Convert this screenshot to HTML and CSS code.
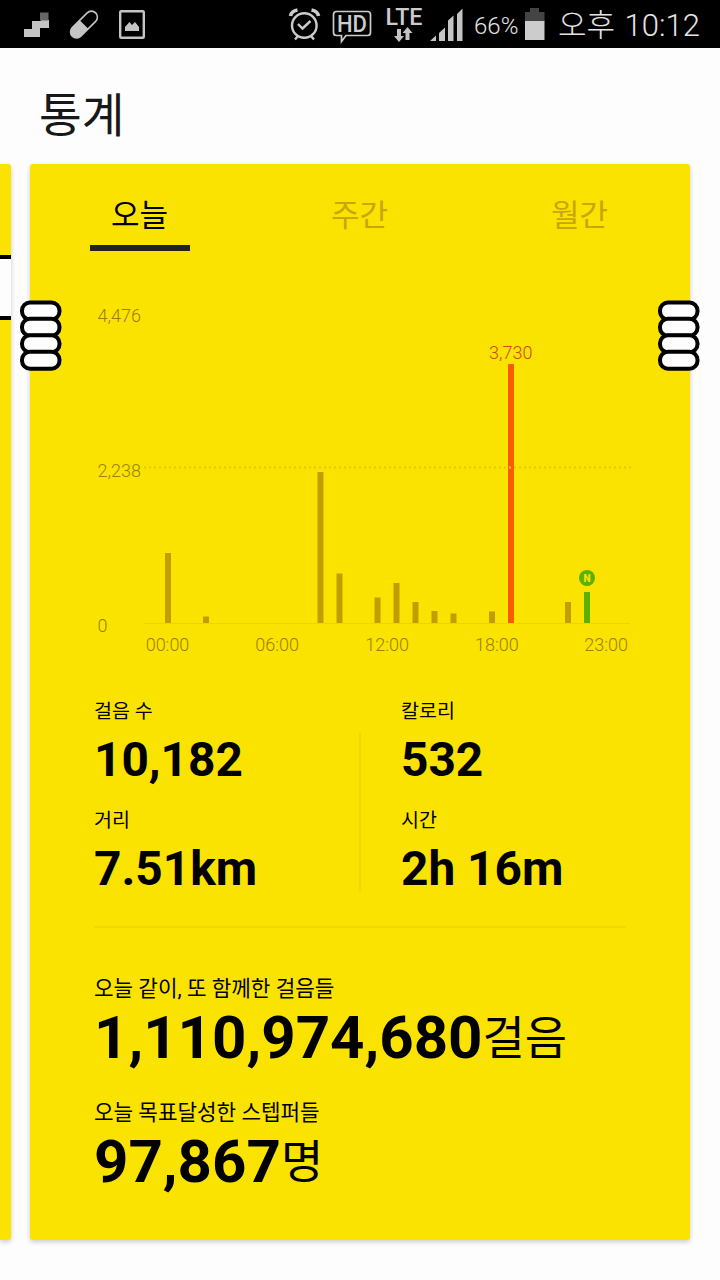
FILE: index.html
```html
<!DOCTYPE html>
<html lang="ko">
<head>
  <meta charset="UTF-8">
  <meta name="viewport" content="width=device-width, initial-scale=1">
  <title>통계</title>
  <link rel="stylesheet" href="styles.css">
</head>
<body>

<header class="statusbar">
  <svg class="notices" width="150" height="48" viewBox="0 0 150 48">
    <path d="M24 37V29h8v-8h9v-1h8v8h-9v9z" fill="#c4c4c4"/>
    <path d="M40 12.500h8.500v8H40z" fill="#666"/>
    <g transform="rotate(-45 84 24.500)">
      <rect x="67.500" y="18.500" width="33" height="12" rx="6" fill="none" stroke="#c4c4c4" stroke-width="1.600"/>
      <path d="M84 18.500v12H73.500a6 6 0 0 1 0-12z" fill="#c4c4c4"/>
    </g>
    <rect x="120.200" y="11.200" width="23.600" height="26.600" rx="1" fill="none" stroke="#c4c4c4" stroke-width="2.400"/>
    <path d="M125 31v-4l4.500-5 2.500 3 3-3 4 5v4z" fill="#c4c4c4"/>
  </svg>
  <svg class="signals" width="190" height="48" viewBox="280 0 190 48">
    <g fill="none" stroke="#ccc" stroke-width="2.400">
      <circle cx="304.300" cy="25.500" r="12.300"/>
      <path d="M298 24l4.500 4.500 8-7.500M298 36l-3 3.500M311 36l3 3.500"/>
      <path d="M290.500 16q1-5 7-6M311.500 10q6 1 7 6" stroke-width="3.600"/>
    </g>
    <path d="M336.500 11.500h31q3 0 3 3v18q0 3-3 3h-21.500l-4.500 6v-6h-5q-3 0-3-3v-18q0-3 3-3z" fill="none" stroke="#ccc" stroke-width="1.700"/>
    <text class="hd" x="352" y="32" textLength="30" lengthAdjust="spacingAndGlyphs">HD</text>
    <text class="lte" x="404" y="25" textLength="37" lengthAdjust="spacingAndGlyphs">LTE</text>
    <path d="M397 29h4v7h3l-5 6-5-6h3zM405.500 40v-7h-3l5-6 5 6h-3v7z" fill="#c4c4c4"/>
    <path d="M430 41l6-5.500V41zM439 41v-8l6-5.500V41zM448 41V20.500l5.500-5V41zM457 41V14l5.500-5.500V41z" fill="#c4c4c4"/>
  </svg>
  <span class="percent">66%</span>
  <svg class="battery" width="22" height="48" viewBox="524 0 22 48">
    <path d="M525 12h5V8h9v4h5.500v9.500H525z" fill="#444"/>
    <path d="M525 21h19.500v19H525z" fill="#ccc"/>
  </svg>
  <span class="clock">오후 <span>10:12</span></span>
</header>

<h1>통계</h1>

<main class="pager">
  <section class="card prev"><div class="band"></div></section>

  <section class="card stats">
    <svg class="rings left" width="42" height="71" viewBox="0 0 42 71">
      <g class="ring">
        <rect x="2" y="2.500" width="37.500" height="17" rx="8"/>
        <rect x="2" y="18.800" width="37.500" height="17" rx="8"/>
        <rect x="2" y="35.200" width="37.500" height="17" rx="8"/>
        <rect x="2" y="51.700" width="37.500" height="17" rx="8"/>
      </g>
    </svg>
    <svg class="rings right" width="42" height="71" viewBox="0 0 42 71">
      <g class="ring">
        <rect x="2" y="2.500" width="37.500" height="17" rx="8"/>
        <rect x="2" y="18.800" width="37.500" height="17" rx="8"/>
        <rect x="2" y="35.200" width="37.500" height="17" rx="8"/>
        <rect x="2" y="51.700" width="37.500" height="17" rx="8"/>
      </g>
    </svg>

    <nav class="tabs">
      <a class="tab active">오늘</a>
      <a class="tab">주간</a>
      <a class="tab">월간</a>
    </nav>

    <svg class="chart" width="660" height="380" viewBox="30 290 660 380">
      <g class="axis">
        <text x="97.500" y="322">4,476</text>
        <text x="97.500" y="477">2,238</text>
        <text x="97.500" y="632">0</text>
      </g>
      <g class="axis hours">
        <text x="167.500" y="651.300">00:00</text>
        <text x="277.200" y="651.300">06:00</text>
        <text x="387.200" y="651.300">12:00</text>
        <text x="496.800" y="651.300">18:00</text>
        <text x="606.200" y="651.300">23:00</text>
      </g>
      <path class="base" d="M144 623.500h486"/>
      <g class="bars">
        <rect x="165" y="553" width="6" height="70"/>
        <rect x="203" y="616.500" width="6" height="6.500"/>
        <rect x="317.500" y="472" width="6" height="151"/>
        <rect x="336.500" y="573.500" width="6" height="49.500"/>
        <rect x="374.500" y="597.500" width="6" height="25.500"/>
        <rect x="393.500" y="583" width="6" height="40"/>
        <rect x="412.500" y="602" width="6" height="21"/>
        <rect x="431.500" y="611" width="6" height="12"/>
        <rect x="450.500" y="613.500" width="6" height="9.500"/>
        <rect x="489" y="611.500" width="6" height="11.500"/>
        <rect class="max" x="508" y="364" width="6" height="259"/>
        <rect x="565" y="602" width="6" height="21"/>
        <rect class="now" x="584" y="592" width="6" height="31"/>
      </g>
      <path class="half" d="M144 467.500h487"/>
      <path d="M509 467.500h2" stroke="#ffb45a" stroke-width="2"/>
      <text class="peak" x="510.700" y="358.500">3,730</text>
      <circle cx="587" cy="578" r="8" fill="#5cb100"/>
      <text class="badge" x="587" y="581.500">N</text>
    </svg>

    <div class="grid">
      <dl>
        <dt>걸음 수</dt><dd>10,182</dd>
        <dt>거리</dt><dd>7.51km</dd>
      </dl>
      <dl>
        <dt>칼로리</dt><dd>532</dd>
        <dt>시간</dt><dd>2h 16m</dd>
      </dl>
    </div>

    <dl class="totals">
      <dt>오늘 같이, 또 함께한 걸음들</dt>
      <dd>1,110,974,680<span>걸음</span></dd>
      <dt>오늘 목표달성한 스텝퍼들</dt>
      <dd>97,867<span>명</span></dd>
    </dl>
  </section>
</main>

</body>
</html>
```

FILE: styles.css
```css
* { box-sizing: border-box; }
body {
  margin: 0;
  height: 1280px;
  overflow: hidden;
  background: #fdfdfd;
  font-family: Roboto, "Noto Sans CJK KR", sans-serif;
  color: #000;
}
svg { display: block; flex: none; }

.statusbar {
  display: flex;
  height: 48px;
  background: #000;
  color: #e4e4e4;
  font-weight: 300;
  line-height: 48px;
  white-space: nowrap;
}
.signals { margin-left: 130px; }
.signals text {
  fill: #ccc;
  text-anchor: middle;
  font-family: Roboto, sans-serif;
}
.signals .hd { font-size: 24px; font-weight: 500; }
.signals .lte { font-size: 23px; font-weight: 500; }
.percent { width: 50px; padding: 2px 0 0 4px; font-size: 24px; }
.battery { margin-left: 4px; }
.clock { padding: 2px 0 0 12px; font-size: 31px; }
.clock span { margin-left: 2px; }

h1 {
  height: 116px;
  margin: 0;
  padding-left: 39px;
  font-size: 46.5px;
  font-weight: 400;
  line-height: 136px;
  color: #181818;
}

.pager { display: flex; gap: 19px; }
.card {
  flex: none;
  height: 1076px;
  background: #fae300;
  border-radius: 3px;
  box-shadow: 0 2px 5px rgba(0,0,0,.2);
}
.prev { width: 11px; padding-top: 91px; border-radius: 0 3px 3px 0; }
.band {
  height: 65px;
  border: solid #000;
  border-width: 4px 0;
  background: #fdfdfd;
}
.stats { position: relative; width: 660px; }

/* binder rings over both card edges */
.rings { position: absolute; top: 136px; }
.rings.left { left: -10px; }
.rings.right { right: -10px; }
.ring { fill: #fdfdfd; stroke: #000; stroke-width: 4; }

.tabs {
  display: flex;
  justify-content: space-between;
  height: 126px;
  padding: 26px 60px 0;
}
.tab {
  width: 100px;
  height: 61px;
  font-size: 31px;
  line-height: 52px;
  text-align: center;
  text-indent: -1px;
  color: #c8a60c;
}
.tab.active { border-bottom: 6px solid #222; color: #000; }

.axis text, .peak { font-size: 18px; font-weight: 300; fill: #9c8000; }
.hours text, .peak, .badge { text-anchor: middle; }
.chart .peak { fill: #d0480c; }
.chart .badge { font-size: 10px; font-weight: 900; fill: #fae300; }
.base { stroke: #efd500; }
.half { fill: none; stroke: #e6ca00; stroke-width: 2; stroke-dasharray: 2 3; }
.bars { fill: #bf9f00; }
.bars .max { fill: #fa5a00; }
.bars .now { fill: #5cb100; }

dl, dd { margin: 0; }
.grid {
  display: grid;
  grid-template-columns: 307px 1fr;
  height: 258px;
  margin: 0 64px;
  padding-top: 25px;
  border-bottom: 2px solid #f2d800;
  background: linear-gradient(#f2d800, #f2d800) 265px 62px / 2px 159px no-repeat;
}
.grid dt { height: 30px; font-size: 19.5px; line-height: 33px; }
.grid dd { height: 79px; font-size: 47.8px; font-weight: 700; line-height: 71px; }
.totals { padding: 44px 64px 0; }
.totals dt { height: 32px; font-size: 21.25px; line-height: 34px; }
.totals dd { height: 92px; font-size: 60px; font-weight: 700; line-height: 68px; white-space: nowrap; }
.totals span {
  font-size: 46px;
  font-weight: 400;
  line-height: 1;
  vertical-align: 4px;
}
```
